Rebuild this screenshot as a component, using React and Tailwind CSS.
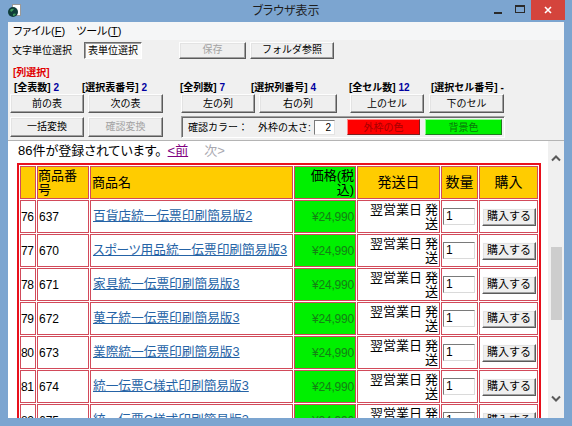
import React from "react";

const FONT = "font-['Liberation_Sans','Noto_Sans_CJK_JP',sans-serif]";

function Btn({ children, className = "", disabled = false }) {
  return (
    <div
      className={`flex items-center justify-center bg-[#efefef] border border-t-[#fdfdfd] border-l-[#fdfdfd] border-r-[#5a5a5a] border-b-[#5a5a5a] shadow-[inset_-1px_-1px_0_#a0a0a0,inset_1px_1px_0_#e3e3e3] text-[10px] leading-none whitespace-nowrap ${
        disabled ? "text-[#a3a3a3]" : "text-black"
      } ${className}`}
    >
      {children}
    </div>
  );
}

function AppIcon() {
  return (
    <svg width="14" height="14" viewBox="0 0 14 14">
      <rect x="5.5" y="0.5" width="8" height="11" fill="#ffffff" stroke="#9a9a9a" />
      <circle cx="6" cy="8" r="5" fill="#0f3d3a" />
      <path d="M3 6 Q5 4 7 5 Q6 7 4 8 Z" fill="#3d9a5c" />
      <path d="M6 10 Q8 9 9 10 Q8 12 6 12 Z" fill="#3d9a5c" />
    </svg>
  );
}

function TitleBar() {
  return (
    <div className="h-[22px] grid grid-cols-[1fr_auto_1fr] items-start">
      <div className="pl-[7px] pt-[4px]">
        <AppIcon />
      </div>
      <div className="pt-[3px] text-[12px] leading-[16px] text-[#1e1e1e] [font-feature-settings:'palt']">
        ブラウザ表示
      </div>
      <div className="flex justify-end pr-[7px]">
        <div className="w-[22px] h-[20px] flex items-center justify-center">
          <div className="w-[8px] h-[2px] bg-[#2a2a2a] mt-[5px]" />
        </div>
        <div className="w-[22px] h-[20px] flex items-center justify-center">
          <div className="w-[10px] h-[8px] border border-[#2a2a2a] border-t-2 -mt-[2px]" />
        </div>
        <div className="w-[34px] h-[20px] bg-[#d4443c] flex items-center justify-center">
          <svg width="8" height="8" viewBox="0 0 8 8">
            <path d="M1 1 L7 7 M7 1 L1 7" stroke="#ffffff" strokeWidth="1.6" />
          </svg>
        </div>
      </div>
    </div>
  );
}

function Chevron({ down = false }) {
  return (
    <svg width="10" height="7" viewBox="0 0 10 7">
      <polyline
        points={down ? "1,1.5 5,5.5 9,1.5" : "1,5.5 5,1.5 9,5.5"}
        fill="none"
        stroke="#5a5a5a"
        strokeWidth="2"
      />
    </svg>
  );
}

const rows = [
  { n: "76", id: "637", name: "百貨店統一伝票印刷簡易版2" },
  { n: "77", id: "670", name: "スポーツ用品統一伝票印刷簡易版3" },
  { n: "78", id: "671", name: "家具統一伝票印刷簡易版3" },
  { n: "79", id: "672", name: "菓子統一伝票印刷簡易版3" },
  { n: "80", id: "673", name: "業際統一伝票印刷簡易版3" },
  { n: "81", id: "674", name: "統一伝票C様式印刷簡易版3" },
  { n: "82", id: "675", name: "統一伝票C様式印刷簡易版3" },
];

const cell = "border border-[#d24a5a] p-0 h-[33px]";

function DataTable() {
  return (
    <table className="w-[524px] border-separate border-spacing-[1px] border-2 border-[#e8101c] text-[13px] text-black">
      <thead>
        <tr>
          <th className={`${cell} w-[16px] bg-[#ffcc00]`}></th>
          <th className={`${cell} w-[52px] bg-[#ffcc00] text-left align-top font-normal leading-[14px] pt-[2px]`}>
            <div>商品番</div>
            <div>号</div>
          </th>
          <th className={`${cell} w-[203px] bg-[#ffcc00] text-left font-normal pl-[1px]`}>商品名</th>
          <th className={`${cell} w-[62px] bg-[#00f000] text-right font-normal leading-[14px] pr-[1px]`}>
            <div>価格(税</div>
            <div>込)</div>
          </th>
          <th className={`${cell} w-[83px] bg-[#ffcc00] text-center font-normal text-[14px]`}>発送日</th>
          <th className={`${cell} w-[37px] bg-[#ffcc00] text-center font-normal text-[14px]`}>数量</th>
          <th className={`${cell} w-[59px] bg-[#ffcc00] text-center font-normal text-[14px]`}>購入</th>
        </tr>
      </thead>
      <tbody>
        {rows.map((r) => (
          <tr key={r.n}>
            <td className={`${cell} text-[12px] tracking-[-0.3px]`}>{r.n}</td>
            <td className={`${cell} text-[12px] pl-[1px]`}>{r.id}</td>
            <td className={`${cell} pl-[2px] whitespace-nowrap overflow-hidden`}>
              <span className="text-[12.7px] text-[#2563a6] underline [font-feature-settings:'palt']">{r.name}</span>
            </td>
            <td className={`${cell} bg-[#00f000] text-right text-[12px] text-[#158015] pr-[1px] tracking-[-0.2px]`}>
              ¥24,990
            </td>
            <td className={`${cell} text-right leading-[14px] pr-[1px]`}>
              <div>
                翌営業日<span className="ml-[3px]">発</span>
              </div>
              <div>送</div>
            </td>
            <td className={`${cell} pl-[1px]`}>
              <div className="w-[32px] h-[17px] bg-white border border-t-[#7a7a7a] border-l-[#7a7a7a] border-r-[#dadada] border-b-[#dadada] text-[12px] leading-[15px] pl-[2px]">
                1
              </div>
            </td>
            <td className={`${cell} pl-[2px]`}>
              <Btn className="w-[54px] h-[18px] text-[11px]">購入する</Btn>
            </td>
          </tr>
        ))}
      </tbody>
    </table>
  );
}

export default function App() {
  return (
    <div className={`w-[572px] h-[426px] bg-[#7ca5d0] flex flex-col overflow-hidden ${FONT}`}>
      <TitleBar />
      <div className="mx-[8px] w-[556px] h-[396px] bg-[#f0f0f0] flex flex-col text-black">
        {/* menu */}
        <div className="h-[18px] flex items-center bg-[#f5f6f7] text-[11px] [font-feature-settings:'palt']">
          <span className="ml-[5px]">
            ファイル(<span className="underline">F</span>)
          </span>
          <span className="ml-[11px]">
            ツール(<span className="underline">T</span>)
          </span>
        </div>

        {/* row 2 */}
        <div className="h-[20px] flex items-center text-[10px]">
          <span className="ml-[4px] w-[72px]">文字単位選択</span>
          <div className="w-[58px] h-[17px] flex items-center justify-center bg-[#fbfbfb] border border-t-[#696969] border-l-[#696969] border-r-white border-b-white shadow-[inset_1px_1px_0_#a0a0a0]">
            表単位選択
          </div>
          <Btn className="w-[67px] h-[17px] ml-[37px]" disabled>
            保存
          </Btn>
          <Btn className="w-[84px] h-[17px] ml-[4px]">フォルダ参照</Btn>
        </div>

        {/* [列選択] */}
        <div className="mt-[4px] h-[16px] flex items-center pl-[5px] text-[10px] font-bold text-[#e00000]">
          [列選択]
        </div>

        {/* labels */}
        <div className="h-[14px] grid grid-cols-[68px_98px_71px_98px_82px_1fr] items-center pl-[6px] text-[10px] font-bold">
          <span>
            [全表数] <span className="text-[#0000a0]">2</span>
          </span>
          <span>
            [選択表番号] <span className="text-[#0000a0]">2</span>
          </span>
          <span>
            [全列数] <span className="text-[#0000a0]">7</span>
          </span>
          <span>
            [選択列番号] <span className="text-[#0000a0]">4</span>
          </span>
          <span>
            [全セル数] <span className="text-[#0000a0]">12</span>
          </span>
          <span>
            [選択セル番号] <span>-</span>
          </span>
        </div>

        {/* buttons row 1 */}
        <div className="h-[19px] flex pl-[2px]">
          <Btn className="w-[74px] h-[19px]">前の表</Btn>
          <Btn className="w-[75px] h-[19px] ml-[4px]">次の表</Btn>
          <Btn className="w-[74px] h-[19px] ml-[18px]">左の列</Btn>
          <Btn className="w-[78px] h-[19px] ml-[4px]">右の列</Btn>
          <Btn className="w-[74px] h-[19px] ml-[13px]">上のセル</Btn>
          <Btn className="w-[75px] h-[19px] ml-[5px]">下のセル</Btn>
        </div>

        {/* buttons row 2 */}
        <div className="mt-[3px] h-[22px] flex items-center pl-[2px]">
          <Btn className="w-[74px] h-[20px]">一括変換</Btn>
          <Btn className="w-[75px] h-[20px] ml-[4px]" disabled>
            確認変換
          </Btn>
          <div className="ml-[18px] w-[324px] h-[22px] flex items-center border border-t-[#a0a0a0] border-l-[#a0a0a0] border-r-white border-b-white shadow-[inset_1px_1px_0_#696969] text-[10px]">
            <span className="ml-[6px] w-[70px]">確認カラー：</span>
            <span className="w-[56px]">外枠の太さ:</span>
            <div className="w-[21px] h-[15px] bg-white border border-t-[#7a7a7a] border-l-[#7a7a7a] border-r-[#e3e3e3] border-b-[#e3e3e3] text-right pr-[3px] leading-[13px]">
              2
            </div>
            <div className="ml-[12px] w-[73px] h-[16px] bg-[#ff0000] border border-t-[#ff8a8a] border-l-[#ff8a8a] border-r-[#7a2020] border-b-[#7a2020] flex items-center justify-center text-[#a80000]">
              外枠の色
            </div>
            <div className="ml-[5px] w-[77px] h-[16px] bg-[#00f000] border border-t-[#8aff8a] border-l-[#8aff8a] border-r-[#207a20] border-b-[#207a20] flex items-center justify-center text-[#0a7a0a]">
              背景色
            </div>
          </div>
        </div>

        {/* browser */}
        <div className="mt-[2px] h-[278px] flex border-t border-[#b4b4b4]">
          <div className="w-[540px] bg-white overflow-hidden pl-[9px]">
            <div className="h-[19px] pl-[1px] flex items-center text-[13px] [font-feature-settings:'palt']">
              <span>86件が登録されています。</span>
              <span className="ml-[6px] text-[#800080] underline">&lt;前</span>
              <span className="ml-[16px] text-[#a8a8b0]">次&gt;</span>
            </div>
            <div className="mt-[3px]">
              <DataTable />
            </div>
          </div>
          <div className="w-[16px] bg-[#f0f0f0] flex flex-col">
            <div className="h-[35px] flex items-center justify-center">
              <Chevron />
            </div>
            <div className="flex-1">
              <div className="mt-[71px] ml-[3px] w-[11px] h-[73px] bg-[#cdcdcd]" />
            </div>
            <div className="h-[40px] flex items-center justify-center">
              <Chevron down />
            </div>
          </div>
        </div>
      </div>
    </div>
  );
}
